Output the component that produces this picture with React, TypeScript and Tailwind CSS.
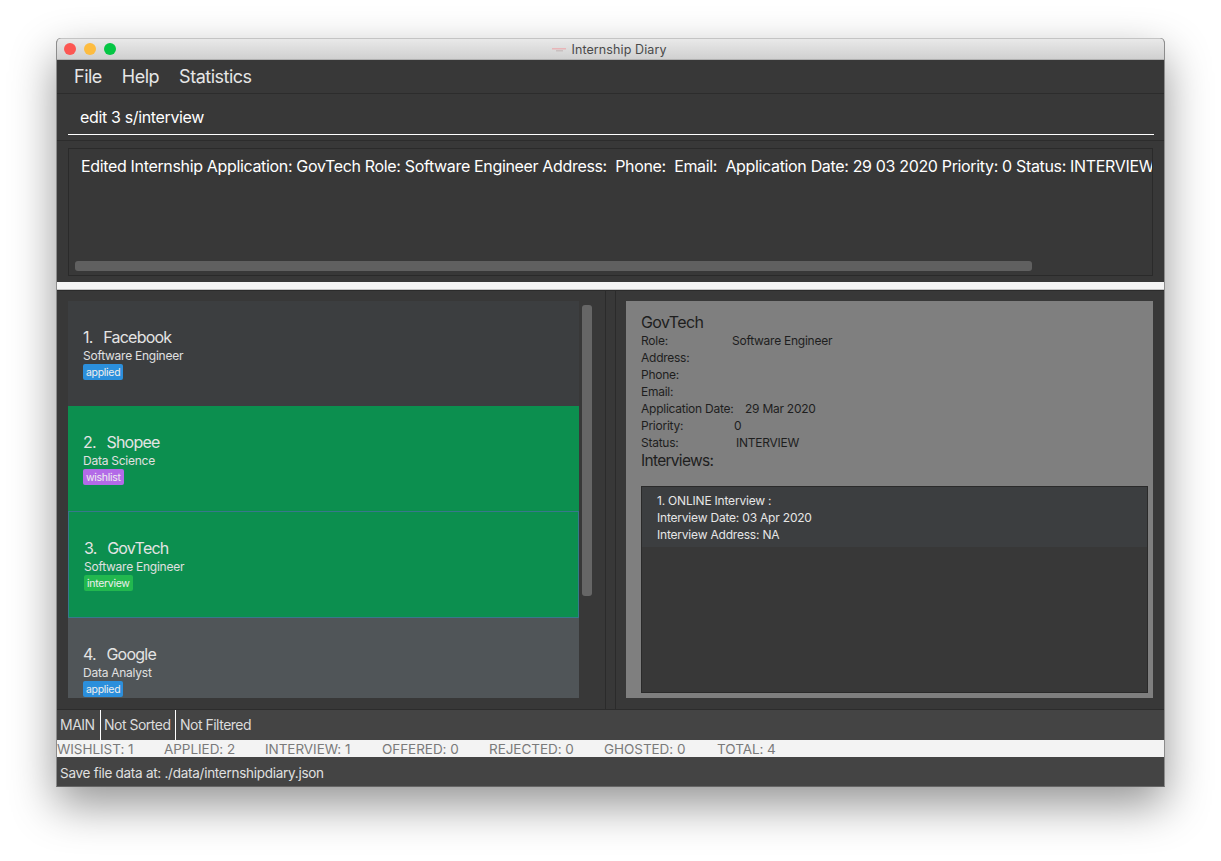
import { ReactNode } from "react";

const font = { fontFamily: "Inter, 'Noto Sans', sans-serif" };

interface Application {
  index: number;
  company: string;
  role: string;
  status: string;
  tagClass: string;
  rowClass: string;
}

const applications: Application[] = [
  { index: 1, company: "Facebook", role: "Software Engineer", status: "applied", tagClass: "bg-[#2b8fdc]", rowClass: "h-[105px] bg-[#3c3e40] pl-[15px]" },
  { index: 2, company: "Shopee", role: "Data Science", status: "wishlist", tagClass: "bg-[#b36ae8]", rowClass: "h-[105px] bg-[#0c8f4f] pl-[15px]" },
  { index: 3, company: "GovTech", role: "Software Engineer", status: "interview", tagClass: "bg-[#22b84f]", rowClass: "h-[107px] bg-[#0c8f4f] pl-[15px] border border-[#38788c]" },
  { index: 4, company: "Google", role: "Data Analyst", status: "applied", tagClass: "bg-[#2b8fdc]", rowClass: "h-[106px] bg-[#505558] pl-[15px]" },
];

const stats = [
  { label: "WISHLIST: 1", cls: "w-[107px]" },
  { label: "APPLIED: 2", cls: "w-[101px]" },
  { label: "INTERVIEW: 1", cls: "w-[117px]" },
  { label: "OFFERED: 0", cls: "w-[107px]" },
  { label: "REJECTED: 0", cls: "w-[115px]" },
  { label: "GHOSTED: 0", cls: "w-[113px]" },
  { label: "TOTAL: 4", cls: "" },
];

const details = [
  { label: "Role:", value: "Software Engineer", cls: "w-[91px]" },
  { label: "Address:", value: "", cls: "w-[91px]" },
  { label: "Phone:", value: "", cls: "w-[91px]" },
  { label: "Email:", value: "", cls: "w-[91px]" },
  { label: "Application Date:", value: "29 Mar 2020", cls: "w-[104px]" },
  { label: "Priority:", value: "0", cls: "w-[93px]" },
  { label: "Status:", value: "INTERVIEW", cls: "w-[95px]" },
];

const ApplicationRow = ({ app }: { app: Application }) => (
  <div className={`shrink-0 pt-[26px] ${app.rowClass}`}>
    <div className="h-[20px] text-[16px] leading-[20px] tracking-[-0.75px] [word-spacing:1.5px] text-[#e4e4e4] whitespace-pre">
      {app.index}.{"  "}{app.company}
    </div>
    <div className="h-[17px] text-[12px] leading-[18px] tracking-[-0.25px] text-[#e0e0e0]">{app.role}</div>
    <span className={`block w-fit h-[16px] rounded-[2px] px-[3px] text-[10.5px] leading-[17px] tracking-[-0.3px] text-[#eeeeee] ${app.tagClass}`}>
      {app.status}
    </span>
  </div>
);

const Panel = ({ children }: { children: ReactNode }) => (
  <div className="flex flex-col h-[419px] w-[548px] shrink-0 border-t border-[#2b2b2b] px-[11px] pt-[10px]">{children}</div>
);

export default function App() {
  return (
    <div className="min-h-[861px] bg-white pl-[56px] pt-[38px]" style={font}>
      <div className="flex flex-col w-[1109px] h-[749px] rounded-t-[5px] bg-[#383838] overflow-hidden border-x border-b border-x-[#8c8c8c] border-b-[#666666] shadow-[0_18px_45px_rgba(0,0,0,0.42)]">
        {/* title bar */}
        <div className="relative flex items-center justify-center h-[22px] shrink-0 pt-[1px] pr-[2px] bg-gradient-to-b from-[#e9e9e9] to-[#d0d0d0] border-t border-t-[#c4c4c4] border-b border-b-[#b0b0b0]">
          <div className="absolute left-[7px] top-[4px] flex gap-[8px]">
            <span className="block w-[12px] h-[12px] rounded-full bg-[#fc5753]" />
            <span className="block w-[12px] h-[12px] rounded-full bg-[#fdbc40]" />
            <span className="block w-[12px] h-[12px] rounded-full bg-[#05c644]" />
          </div>
          <div className="flex items-center gap-[5px] text-[12.5px] leading-[20px] tracking-[0.1px] text-[#4a4a4a]">
            <svg width="14" height="4" viewBox="0 0 14 4">
              <rect x="0" y="0" width="14" height="1.5" fill="#e8b5b8" />
              <rect x="4" y="2" width="7" height="1.5" fill="#c9c0c0" />
            </svg>
            Internship Diary
          </div>
        </div>

        {/* menu */}
        <div className="flex items-center gap-[20px] h-[34px] shrink-0 pl-[17px] border-b border-[#2c2c2c] text-[18px] tracking-[-0.5px] text-[#e6e6e6]">
          <span>File</span>
          <span>Help</span>
          <span>Statistics</span>
        </div>

        {/* command box */}
        <div className="h-[47px] shrink-0 pl-[11px] pr-[10px] pt-[12px] border-b border-[#2c2c2c]">
          <div className="h-[29px] pl-[12px] border-b border-white text-[16px] leading-[22px] tracking-[-0.35px] text-white">
            edit 3 s/interview
          </div>
        </div>

        {/* result display */}
        <div className="h-[141px] shrink-0 px-[11px] pt-[7px]">
          <div className="flex flex-col h-[128px] border border-[#2a2a2a] overflow-hidden">
            <div className="h-[112px] shrink-0 pl-[12px] pt-[6px] overflow-hidden whitespace-nowrap text-[16px] leading-[22px] tracking-[-0.34px] text-white">
              Edited Internship Application: GovTech Role: Software Engineer Address:&nbsp; Phone:&nbsp; Email:&nbsp; Application Date: 29 03 2020 Priority: 0 Status: INTERVIEW
            </div>
            <div className="ml-[6px] w-[957px] h-[10px] rounded-[3px] bg-[#606060]" />
          </div>
        </div>

        {/* splitter */}
        <div className="h-[8px] shrink-0 bg-[#f4f4f4] border-b border-[#c4c4c4]" />

        {/* lists */}
        <div className="flex h-[419px] shrink-0">
          <Panel>
            <div className="flex gap-[3px] h-[397px]">
              <div className="flex flex-col w-[511px] overflow-hidden">
                {applications.map((app) => (
                  <ApplicationRow key={app.index} app={app} />
                ))}
              </div>
              <div className="mt-[4px] w-[10px] h-[291px] rounded-[3px] bg-[#666666]" />
            </div>
          </Panel>
          <div className="w-[11px] shrink-0 border-x border-t border-[#2b2b2b]" />
          <div className="flex-1 border-t border-[#2b2b2b] pl-[10px] pr-[11px] pt-[10px]">
            <div className="flex flex-col h-[397px] bg-[#7f7f7f] pl-[15px] pr-[5px] pt-[12px] text-[#1e1e1e]">
              <div className="h-[18px] text-[16px] leading-[18px] tracking-[-0.6px]">GovTech</div>
              {details.map((row) => (
                <div key={row.label} className="flex h-[17px] text-[12px] leading-[20px] tracking-[-0.25px]">
                  <span className={`shrink-0 ${row.cls}`}>{row.label}</span>
                  <span>{row.value}</span>
                </div>
              ))}
              <div className="h-[20px] text-[15.5px] leading-[22px] tracking-[-0.7px]">Interviews:</div>
              <div className="flex-1 mt-[16px] mb-[5px] border border-[#2a2a2a] bg-[#383838]">
                <div className="h-[60px] bg-[#3c3e40] pl-[15px] pt-[5px] text-[12px] leading-[17px] tracking-[-0.2px] text-[#e6e6e6]">
                  <div>1. ONLINE Interview :</div>
                  <div>Interview Date: 03 Apr 2020</div>
                  <div>Interview Address: NA</div>
                </div>
              </div>
            </div>
          </div>
        </div>

        {/* status bars */}
        <div className="flex items-stretch h-[31px] shrink-0 bg-[#444444] border-t border-[#2c2c2c] text-[14px] leading-[30px] tracking-[-0.5px] text-[#dcdcdc]">
          <span className="w-[44px] pl-[3px] border-r border-white">MAIN</span>
          <span className="w-[75px] pl-[3px] border-r border-white">Not Sorted</span>
          <span className="pl-[4px]">Not Filtered</span>
        </div>
        <div className="flex h-[17px] shrink-0 bg-[#f3f3f3] text-[13.5px] leading-[18px] tracking-[-0.05px] text-[#7a7a7a]">
          {stats.map((s) => (
            <span key={s.label} className={`shrink-0 ${s.cls}`}>{s.label}</span>
          ))}
        </div>
        <div className="flex-1 bg-[#444444] pl-[3px] text-[13.5px] leading-[32px] tracking-[-0.27px] text-[#e0e0e0]">
          Save file data at: ./data/internshipdiary.json
        </div>
      </div>
    </div>
  );
}
